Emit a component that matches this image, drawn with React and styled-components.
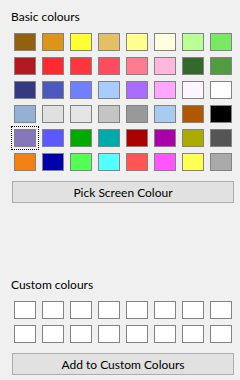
import React from 'react';
import styled, { createGlobalStyle } from 'styled-components';

const GlobalStyle = createGlobalStyle`
  html, body {
    margin: 0;
    padding: 0;
    background: #f0f0f0;
  }
  body {
    font-family: Lato, "Noto Sans", sans-serif;
    color: #000;
  }
`;

const basicColours = [
  '#92600f', '#dc9519', '#ffff33', '#e3bf66', '#ffff92', '#ffffe0', '#b9ff96', '#79e862',
  '#b01a20', '#ff2a30', '#ff3540', '#ff4d5f', '#ff7c90', '#ffb8dc', '#35682c', '#519c40',
  '#333a80', '#4a58c0', '#6f80ff', '#a8ccff', '#a86cff', '#ffa6ff', '#fdf6ff', '#ffffff',
  '#94b1d5', '#e0e0e0', '#e5e5e5', '#c4c4c4', '#999999', '#a8ccf0', '#ae5800', '#000000',
  '#8577b8', '#5959ff', '#00aa00', '#00aaaa', '#aa0000', '#aa00aa', '#aaaa00', '#555555',
  '#f28012', '#0000aa', '#55ff55', '#55ffff', '#ff5555', '#ff55ff', '#ffff55', '#aaaaaa',
];

const Panel = styled.div`
  width: 240px;
  height: 380px;
  box-sizing: border-box;
  padding: 9px 6px 0 12px;
  display: flex;
  flex-direction: column;
`;

const Label = styled.div`
  height: 16px;
  line-height: 16px;
  font-size: 12px;
  margin-left: -1px;
  margin-top: ${({ top }) => top || 0}px;
`;

const Grid = styled.div`
  display: grid;
  grid-template-columns: repeat(8, 22px);
  grid-auto-rows: 18px;
  column-gap: 6px;
  row-gap: 6px;
  margin: 8px 0 0 2px;
`;

const Swatch = styled.div`
  box-sizing: border-box;
  border: 1px solid #838383;
  background: ${({ colour }) => colour};
  outline: ${({ focused }) => (focused ? '1px dotted #000' : 'none')};
  outline-offset: 2px;
`;

const Button = styled.button`
  box-sizing: border-box;
  width: 222px;
  height: 22px;
  margin-top: 10px;
  padding: 0;
  background: #e1e1e1;
  border: 1px solid #adadad;
  font-family: Lato, "Noto Sans", sans-serif;
  font-size: 12px;
  color: #000;
`;

export default function App() {
  return (
    <>
      <GlobalStyle />
      <Panel>
        <Label>Basic colours</Label>
        <Grid>
          {basicColours.map((c, i) => (
            <Swatch key={i} colour={c} focused={i === 32} />
          ))}
        </Grid>
        <Button>Pick Screen Colour</Button>
        <Label top={74}>Custom colours</Label>
        <Grid>
          {Array.from({ length: 16 }).map((_, i) => (
            <Swatch key={i} colour="#ffffff" />
          ))}
        </Grid>
        <Button>Add to Custom Colours</Button>
      </Panel>
    </>
  );
}
